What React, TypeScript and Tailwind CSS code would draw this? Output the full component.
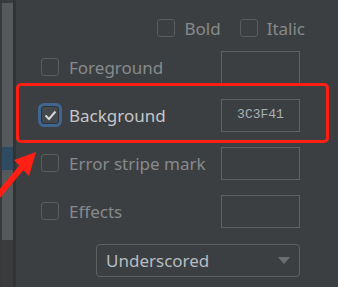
import React from "react";

const font = { fontFamily: '"Noto Sans", "Open Sans", sans-serif' };

function Box({ checked = false }: { checked?: boolean }) {
  if (checked) {
    return (
      <div className="w-[18px] h-[18px] shrink-0 rounded-[3px] bg-[#43494c] border border-[#2f3336] ring-[3px] ring-[#3f6690] flex items-center justify-center">
        <svg width="13" height="11" viewBox="0 0 13 11">
          <path d="M1.5 5.5 L5 9 L11.5 1.5" fill="none" stroke="#d6d6d6" strokeWidth="2" />
        </svg>
      </div>
    );
  }
  return <div className="w-[18px] h-[18px] shrink-0 rounded-[3px] border border-[#5a5d5f] bg-[#3c3f41]" />;
}

function Row({ label, checked, value }: { label: string; checked?: boolean; value?: string }) {
  return (
    <div className="h-[48px] flex items-center">
      <Box checked={checked} />
      <span
        className={
          "ml-[10px] text-[17px] leading-none " +
          (checked ? "text-[#c4c7c9]" : "text-[#878a8c]")
        }
      >
        {label}
      </span>
      <div className="ml-auto w-[79px] h-[33px] border border-[#5e6162] flex items-center justify-center">
        {value && (
          <span className="text-[13px] text-[#a9b0b5]" style={{ fontFamily: '"Liberation Mono", monospace' }}>
            {value}
          </span>
        )}
      </div>
    </div>
  );
}

export default function App() {
  return (
    <div className="w-[338px] h-[287px] bg-[#3c3f41] flex relative overflow-hidden" style={font}>
      {/* side strip */}
      <div className="w-4 h-full flex shrink-0 bg-[#393b3d]">
        <div className="w-[2px] h-full bg-[#37393b]" />
        <div className="w-[11px] h-full flex flex-col pt-[3px]">
          <div className="h-[144px] bg-[#56595b]" />
          <div className="h-[23px] bg-[#2f4b62]" />
          <div className="h-[70px] bg-[#56595b]" />
        </div>
        <div className="w-[3px] h-full bg-[#313335]" />
      </div>

      {/* settings */}
      <div className="flex-1 flex flex-col pl-[25px] pr-[38px] pt-[19px]">
        <div className="flex items-center justify-end h-[18px] mr-[-5px] text-[17px] text-[#878a8c]">
          <Box />
          <span className="ml-[9px] leading-none">Bold</span>
          <div className="ml-[19px]">
            <Box />
          </div>
          <span className="ml-[9px] leading-none">Italic</span>
        </div>

        <div className="mt-[6px] flex flex-col">
          <Row label="Foreground" />
          <Row label="Background" checked value="3C3F41" />
          <Row label="Error stripe mark" />
          <Row label="Effects" />
        </div>

        <div className="mt-[9px] ml-[55px] h-[33px] rounded-[4px] border border-[#5e6162] flex items-center pl-[9px] pr-[9px]">
          <span className="text-[17px] leading-none text-[#b4bcc2]">Underscored</span>
          <svg className="ml-auto" width="12" height="7" viewBox="0 0 12 7">
            <path d="M0 0 H12 L6 7 Z" fill="#6b6e70" />
          </svg>
        </div>
      </div>

      {/* annotation */}
      <div className="absolute left-[16px] top-[83px] w-[313px] h-[60px] border-[3px] border-[#ff1f14] rounded-[5px] pointer-events-none" />
      <svg className="absolute left-0 top-[145px] pointer-events-none" width="40" height="55" viewBox="0 145 40 55">
        <path d="M-3 197 L22 167" stroke="#ff1f14" strokeWidth="6" />
        <path d="M36 152 L14 160 L29 176 Z" fill="#ff1f14" />
      </svg>
    </div>
  );
}
